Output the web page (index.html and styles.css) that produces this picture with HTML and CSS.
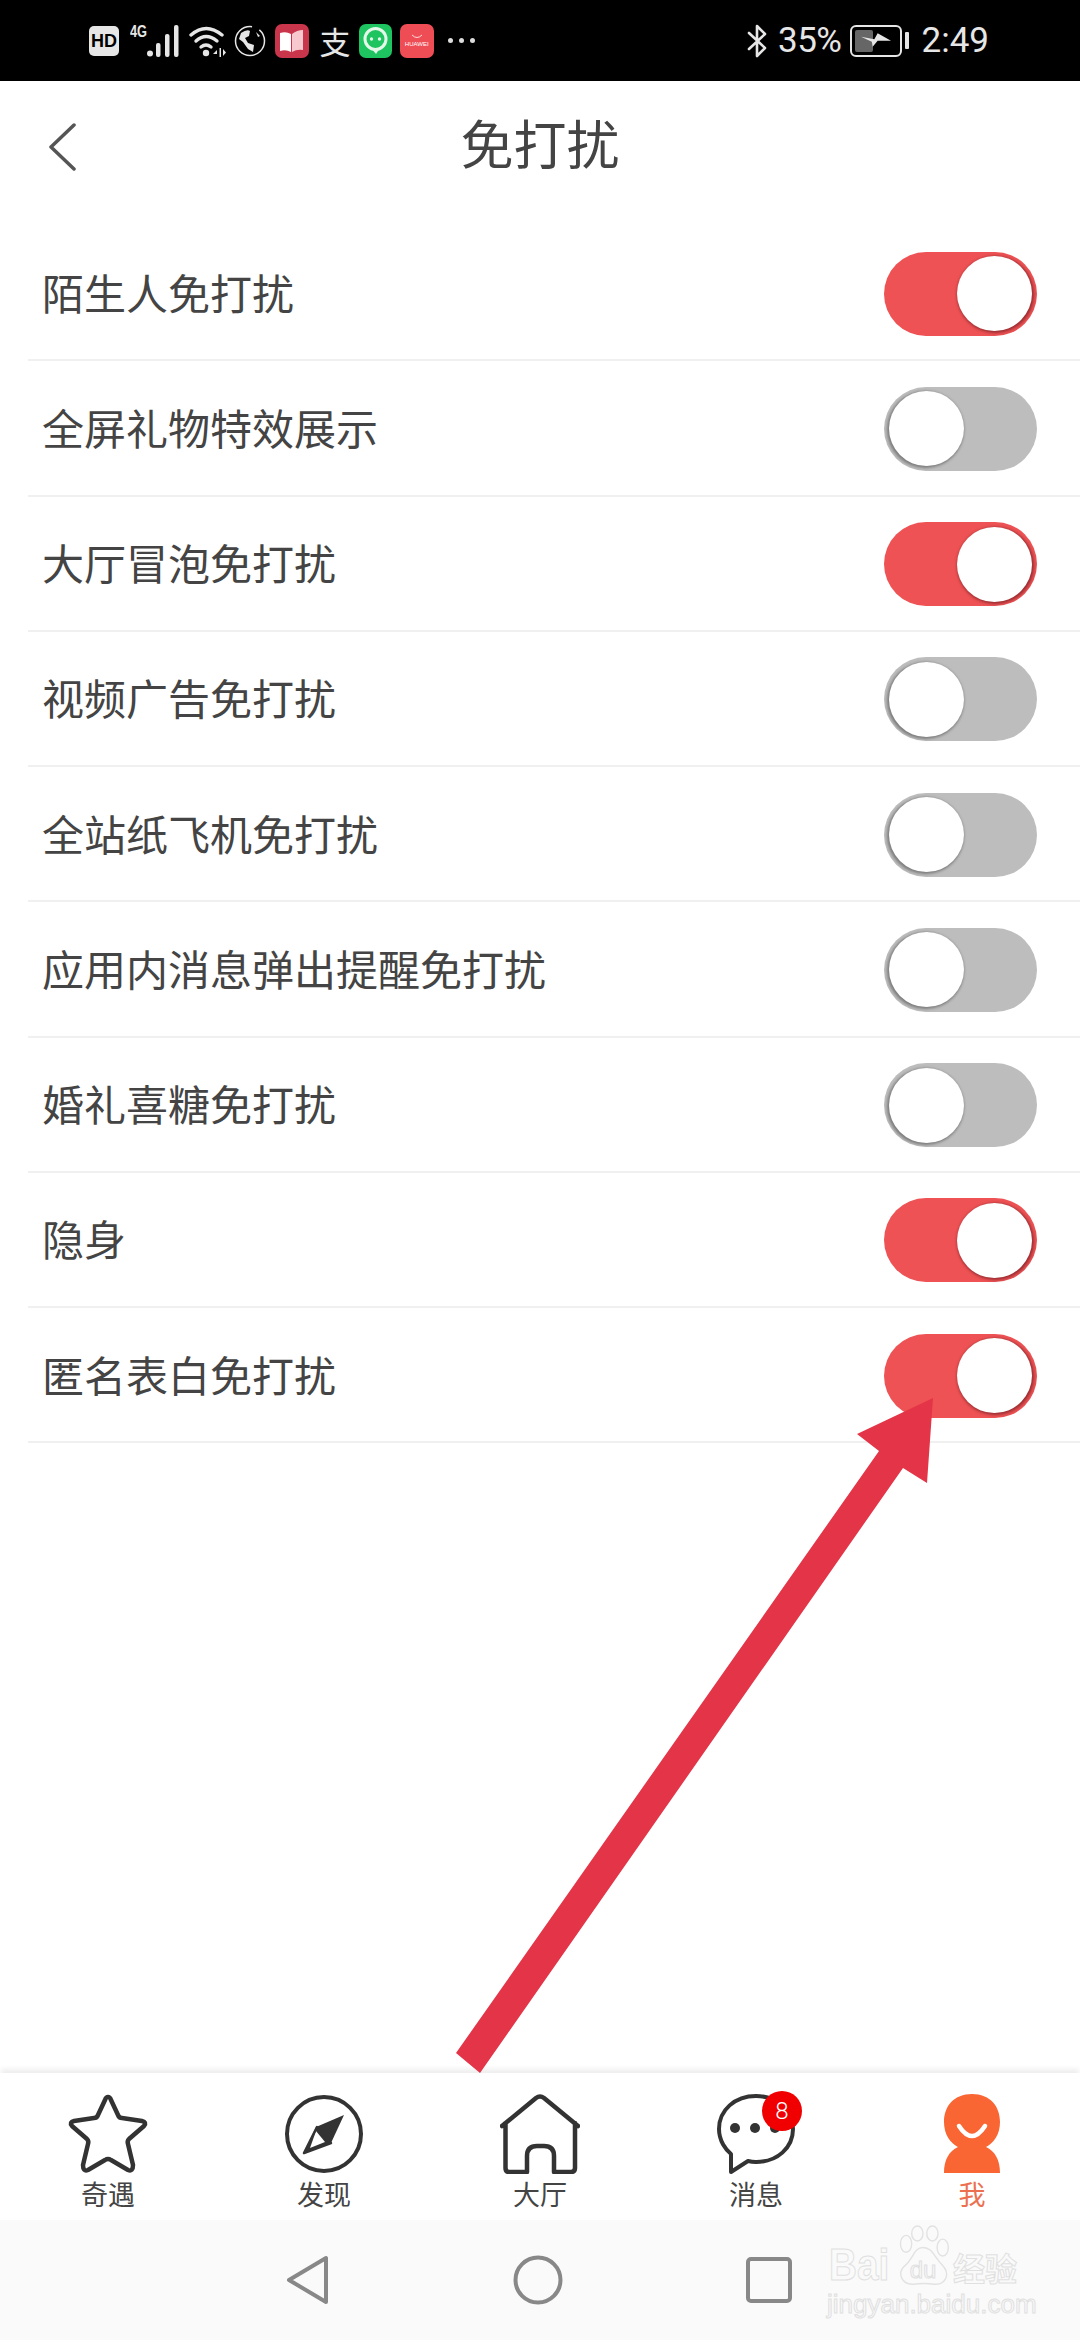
FILE: index.html
```html
<!DOCTYPE html>
<html lang="en">
<head>
  <meta charset="UTF-8" />
  <title>免打扰</title>
  <link rel="stylesheet" href="styles.css">
</head>
<body>
  <div class="status-bar">
    <div class="status-left">
      <span class="hd">HD</span>
      <span class="net">4G</span>
      <svg class="signal" viewBox="0 0 32 32"><g fill="#e6e6e6"><circle cx="3" cy="28.5" r="3"/><rect x="9" y="18" width="4.5" height="14" rx="2"/><rect x="18" y="9" width="4.5" height="23" rx="2"/><rect x="27" y="0" width="4.5" height="32" rx="2"/></g></svg>
      <svg class="wifi" viewBox="0 0 38 32"><g fill="none" stroke="#e6e6e6" stroke-width="3.4" stroke-linecap="round"><path d="M2 10Q17 -3 33 10"/><path d="M7 16Q17 7 28 16"/><path d="M12 22Q17 18 22 22"/></g><circle cx="17" cy="28" r="3.2" fill="#e6e6e6"/><path d="M28 25l-4 4h4zM30.500 23v9h1.500v-9zM34 24v7l3-3.500z" fill="#e6e6e6"/></svg>
      <svg class="globe" viewBox="0 0 32 32"><circle cx="16" cy="16" r="14.500" fill="none" stroke="#e6e6e6" stroke-width="1.500" stroke-dasharray="70 8"/><path d="M7 8Q13 4 16 6L15 11 11 13 14 18 20 20 19 27 14 24 9 17 5 14zM22 7l4 4-2 1z" fill="#e6e6e6"/></svg>
      <span class="app app-book"><svg viewBox="0 0 33 34"><path d="M5 9Q11 7 16 10V28Q11 25 5 27z" fill="#fff"/><path d="M17 10Q22 6 28 6V26Q22 25 17 28z" fill="#f7c9cf"/></svg></span>
      <span class="zhi">支</span>
      <span class="app app-chat"><svg viewBox="0 0 33 34"><circle cx="16.500" cy="15" r="10.500" fill="none" stroke="#e4f8ea" stroke-width="3"/><path d="M12 24l5 6 4-6z" fill="#e4f8ea"/><circle cx="12.500" cy="15" r="1.700" fill="#e4f8ea"/><circle cx="20.500" cy="15" r="1.700" fill="#e4f8ea"/></svg></span>
      <span class="app app-huawei"><svg class="smile" viewBox="0 0 12 5"><path d="M1 1Q6 6 11 1" fill="none" stroke="#fff" stroke-width="0.800"/></svg><span class="huawei-text">HUAWEI</span></span>
      <span class="more"><i></i><i></i><i></i></span>
    </div>
    <div class="status-right">
      <svg class="bt" viewBox="0 0 21 34"><path d="M2 9L18 24 10 32V2L18 10 2 25" fill="none" stroke="#e6e6e6" stroke-width="2.600" stroke-linejoin="round" stroke-linecap="round"/></svg>
      <span class="pct">35%</span>
      <span class="battery"><span class="battery-fill"></span><svg class="bolt" viewBox="0 0 36 16"><path d="M0 4L16 7 20 0 36 9 20 9 14 16 13 10z" fill="#e6e6e6"/></svg></span>
      <span class="battery-nib"></span>
      <span class="clock">2:49</span>
    </div>
  </div>

  <div class="header">
    <svg class="back" viewBox="0 0 28 48"><path d="M26 2L3 24 26 46" fill="none" stroke="#555" stroke-width="3.500" stroke-linecap="round" stroke-linejoin="round"/></svg>
    <h1 class="title">免打扰</h1>
  </div>

  <div class="list">
    <div class="row"><span class="label">陌生人免打扰</span><span class="switch on"></span></div>
    <div class="row"><span class="label">全屏礼物特效展示</span><span class="switch"></span></div>
    <div class="row"><span class="label">大厅冒泡免打扰</span><span class="switch on"></span></div>
    <div class="row"><span class="label">视频广告免打扰</span><span class="switch"></span></div>
    <div class="row"><span class="label">全站纸飞机免打扰</span><span class="switch"></span></div>
    <div class="row"><span class="label">应用内消息弹出提醒免打扰</span><span class="switch"></span></div>
    <div class="row"><span class="label">婚礼喜糖免打扰</span><span class="switch"></span></div>
    <div class="row"><span class="label">隐身</span><span class="switch on"></span></div>
    <div class="row"><span class="label">匿名表白免打扰</span><span class="switch on"></span></div>
  </div>

  <div class="tabbar">
    <div class="tab">
      <svg class="tab-icon" width="82" height="80" viewBox="0 0 82 80"><path d="M41 3Q43 3 44 6L51 21Q52 24 55 24L75 27Q80 28 77 32L62 45Q60 47 61 50L66 71Q66 78 61 76L44 66Q41 64 38 66L21 76Q16 78 16 71L21 50Q22 47 20 45L5 32Q2 28 7 27L27 24Q30 24 31 21L38 6Q39 3 41 3Z" fill="none" stroke="#333" stroke-width="4.500" stroke-linejoin="round"/></svg>
      <span class="tab-label">奇遇</span>
    </div>
    <div class="tab">
      <svg class="tab-icon" width="80" height="80" viewBox="0 0 80 80"><circle cx="40" cy="40" r="37" fill="none" stroke="#333" stroke-width="4"/><path d="M60 21L47 49 20 59 32 33Z" fill="#333"/><path d="M32 37L41 48 26 54Z" fill="#fff"/><path d="M33 33L47 49 20 59Z" fill="none" stroke="#333" stroke-width="2.500" stroke-linejoin="round"/></svg>
      <span class="tab-label">发现</span>
    </div>
    <div class="tab">
      <svg class="tab-icon" width="80" height="80" viewBox="0 0 80 80"><path d="M2 32L36 4Q40 1 44 4L78 32M5.500 29V74Q5.500 78 9 78H27V62Q27 52 37 52H44Q54 52 54 62V78H71Q75 78 75 74V29" fill="none" stroke="#333" stroke-width="4.500" stroke-linecap="round" stroke-linejoin="round"/></svg>
      <span class="tab-label">大厅</span>
    </div>
    <div class="tab">
      <span class="msg-icon">
        <svg class="tab-icon" width="80" height="80" viewBox="0 0 80 80"><path d="M40 2C19 2 3 16 3 35 3 47 10 56 15 60L15 78 32 67Q36 68 40 68C61 68 77 54 77 35 77 16 61 2 40 2Z" fill="none" stroke="#333" stroke-width="4" stroke-linejoin="round"/><circle cx="19" cy="34" r="5" fill="#333"/><circle cx="39" cy="34" r="5" fill="#333"/><circle cx="59" cy="34" r="5" fill="#333"/></svg>
        <span class="badge">8</span>
      </span>
      <span class="tab-label">消息</span>
    </div>
    <div class="tab active">
      <svg class="tab-icon" width="80" height="80" viewBox="0 0 80 80"><path d="M40 0C58 0 68 12 68 28 68 40 62 49 54 53 63 57 68 66 68 79H12C12 66 17 57 26 53 18 49 12 40 12 28 12 12 22 0 40 0Z" fill="#f96533"/><path d="M27 32Q40 52 53 32" fill="none" stroke="#fff" stroke-width="4.500" stroke-linecap="round"/></svg>
      <span class="tab-label">我</span>
    </div>
  </div>

  <div class="navbar">
    <svg class="nav-icon" width="44" height="50" viewBox="0 0 44 50"><path d="M3 25L40 3V47Z" fill="none" stroke="#888" stroke-width="4" stroke-linejoin="round"/></svg>
    <svg class="nav-icon" width="50" height="50" viewBox="0 0 50 50"><circle cx="25" cy="25" r="22.500" fill="none" stroke="#888" stroke-width="4"/></svg>
    <svg class="nav-icon" width="46" height="46" viewBox="0 0 46 46"><rect x="2" y="2" width="42" height="42" rx="3" fill="none" stroke="#888" stroke-width="4"/></svg>
  </div>

  <div class="watermark">
    <div class="wm-top">
      <span class="wm-bai">Bai</span>
      <svg class="wm-paw" width="56" height="62" viewBox="0 0 56 66"><g fill="none" stroke="#e2e2e2" stroke-width="1.500"><ellipse cx="10" cy="20" rx="6" ry="9"/><ellipse cx="22" cy="9" rx="6" ry="8"/><ellipse cx="38" cy="9" rx="6" ry="8"/><ellipse cx="49" cy="24" rx="6" ry="9"/><path d="M28 24C18 24 18 36 8 44 0 52 6 64 18 63 26 62 32 62 40 63 52 64 58 52 48 42 40 34 38 24 28 24Z"/></g></svg>
      <span class="wm-du">du</span>
      <span class="wm-cn">经验</span>
    </div>
    <div class="wm-url">jingyan.baidu.com</div>
  </div>

  <svg class="arrow" viewBox="0 0 1080 2340"><polygon points="933,1398 857,1434 879,1451 456,2053 480,2073 903,1468 927,1483" fill="#e43548"/></svg>
</body>
</html>
```

FILE: styles.css
```css
body {
  font-family: "Noto Sans CJK SC", "Noto Sans", sans-serif;
  margin: 0;
  width: 1080px;
  height: 2340px;
  background: #fff;
  color: #444;
  display: flex;
  flex-direction: column;
  position: relative;
  overflow: hidden;
}

/* status bar */
.status-bar {
  height: 81px;
  flex: none;
  background: #000;
  color: #e6e6e6;
  display: flex;
  align-items: center;
  justify-content: space-between;
  padding: 0 91px 0 89px;
  box-sizing: border-box;
}

.status-left,
.status-right {
  display: flex;
  align-items: center;
}

.hd {
  width: 30px;
  height: 30px;
  background: #e6e6e6;
  color: #000;
  border-radius: 5px;
  font: bold 18px/30px "Liberation Sans", sans-serif;
  text-align: center;
}

.net {
  font: bold 16px/14px "Liberation Sans", sans-serif;
  margin: -17px 0 0 11px;
  width: 17px;
  transform: scaleX(0.8);
  transform-origin: left;
}

.signal {
  width: 32px;
  height: 32px;
}

.wifi {
  width: 38px;
  height: 32px;
  margin-left: 10px;
}

.globe {
  width: 32px;
  height: 32px;
  margin-left: 7px;
}

.app {
  width: 33.5px;
  height: 34px;
  border-radius: 7px;
  display: flex;
  flex-direction: column;
  align-items: center;
  justify-content: center;
}

.app svg {
  display: block;
}

.app-book {
  background: #c9354a;
  margin-left: 9px;
}

.zhi {
  width: 33px;
  margin-left: 10px;
  font-size: 31px;
  line-height: 34px;
  text-align: center;
  color: #e6e6e6;
}

.app-chat {
  background: #1ec45f;
  margin-left: 7px;
}

.app-huawei {
  background: #ef4d55;
  margin-left: 8px;
}

.smile {
  width: 12px;
  height: 5px;
  margin-bottom: 2px;
}

.huawei-text {
  font: 6px/7px "Liberation Sans", sans-serif;
  color: #fff;
}

.more {
  display: flex;
  gap: 6px;
  margin-left: 14px;
}

.more i {
  width: 5px;
  height: 5px;
  border-radius: 50%;
  background: #ddd;
}

.bt {
  width: 21px;
  height: 34px;
}

.pct {
  font: 400 35px/40px Roboto, sans-serif;
  margin-left: 10px;
  letter-spacing: -0.5px;
}

.battery {
  width: 52px;
  height: 32px;
  margin-left: 8px;
  border: 2px solid #e6e6e6;
  border-radius: 6px;
  box-sizing: border-box;
  padding: 3px;
  position: relative;
}

.battery-fill {
  display: block;
  width: 18px;
  height: 22px;
  background: #666;
  border-radius: 2px;
}

.bolt {
  position: absolute;
  left: 9px;
  top: 6px;
  width: 30px;
  height: 14px;
}

.battery-nib {
  width: 4px;
  height: 17px;
  margin-left: 3px;
  background: #e6e6e6;
  border-radius: 1px;
}

.clock {
  font: 400 35px/40px Roboto, sans-serif;
  margin-left: 13px;
}

/* header */
.header {
  height: 130px;
  flex: none;
  display: flex;
  align-items: center;
  justify-content: center;
  position: relative;
}

.back {
  position: absolute;
  left: 48px;
  top: 42px;
  width: 28px;
  height: 48px;
}

.title {
  margin: 0 0 8px;
  font-size: 53px;
  font-weight: 400;
  color: #444;
}

/* settings list */
.list {
  flex: 1;
  margin-left: 28px;
  padding-top: 15px;
}

.row {
  height: 135.25px;
  box-sizing: border-box;
  border-bottom: 2px solid #f0f0f0;
  padding: 2px 43px 0 14px;
  display: flex;
  align-items: center;
  justify-content: space-between;
}

.label {
  font-size: 42px;
  margin-bottom: 5px;
  color: #444;
}

.switch {
  width: 153px;
  height: 84px;
  border-radius: 42px;
  background: #bdbdbd;
  position: relative;
  flex: none;
}

.switch::after {
  content: "";
  position: absolute;
  top: 4.5px;
  left: 5px;
  width: 75px;
  height: 75px;
  border-radius: 50%;
  background: #fff;
  box-shadow: -1px 1px 3px 1px rgba(0, 0, 0, 0.35);
}

.switch.on {
  background: #ee5254;
}

.switch.on::after {
  left: auto;
  right: 5px;
  box-shadow: 1px 1px 3px 1px rgba(70, 10, 15, 0.5);
}

/* bottom tabs */
.tabbar {
  height: 147px;
  flex: none;
  box-sizing: border-box;
  padding-top: 21px;
  background: #fff;
  box-shadow: 0 -5px 5px -1px #eee;
  display: grid;
  grid-template-columns: repeat(5, 1fr);
  position: relative;
}

.tab {
  display: flex;
  flex-direction: column;
  align-items: center;
}

.tab-icon {
  display: block;
}

.tab-label {
  font-size: 27px;
  line-height: 32px;
  margin-top: 4px;
  color: #444;
}

.tab.active .tab-label {
  color: #ec7050;
}

.msg-icon {
  position: relative;
  display: block;
}

.badge {
  position: absolute;
  top: -3px;
  right: -6px;
  width: 40px;
  height: 40px;
  border-radius: 50%;
  background: #f00000;
  color: #fff;
  font: 300 24px/40px Roboto, sans-serif;
  text-align: center;
}

/* system nav */
.navbar {
  height: 120px;
  flex: none;
  background: #fafafa;
  display: flex;
  justify-content: space-between;
  align-items: center;
  padding: 0 288px 0 286px;
  box-sizing: border-box;
}

.nav-icon {
  display: block;
}

/* overlays */
.watermark {
  position: absolute;
  left: 829px;
  top: 2225px;
  width: 195px;
  color: #fafafa;
  -webkit-text-stroke: 1px #e0e0e0;
}

.wm-top {
  display: flex;
  align-items: flex-end;
  height: 62px;
  position: relative;
}

.wm-bai {
  font: bold 44px/44px "Liberation Sans", sans-serif;
  width: 66px;
  transform: scaleX(0.88);
  transform-origin: left;
}

.wm-paw {
  flex: none;
}

.wm-du {
  position: absolute;
  left: 66px;
  bottom: 3px;
  width: 56px;
  text-align: center;
  font: 24px/28px "Liberation Sans", sans-serif;
}

.wm-cn {
  font-size: 32px;
  line-height: 40px;
  font-weight: 700;
  margin-left: 2px;
  white-space: nowrap;
}

.wm-url {
  font: 26px/30px "Liberation Sans", sans-serif;
  margin: 2px 0 0 -2px;
  white-space: nowrap;
}

.arrow {
  position: absolute;
  left: 0;
  top: 0;
  width: 1080px;
  height: 2340px;
  pointer-events: none;
}
```
